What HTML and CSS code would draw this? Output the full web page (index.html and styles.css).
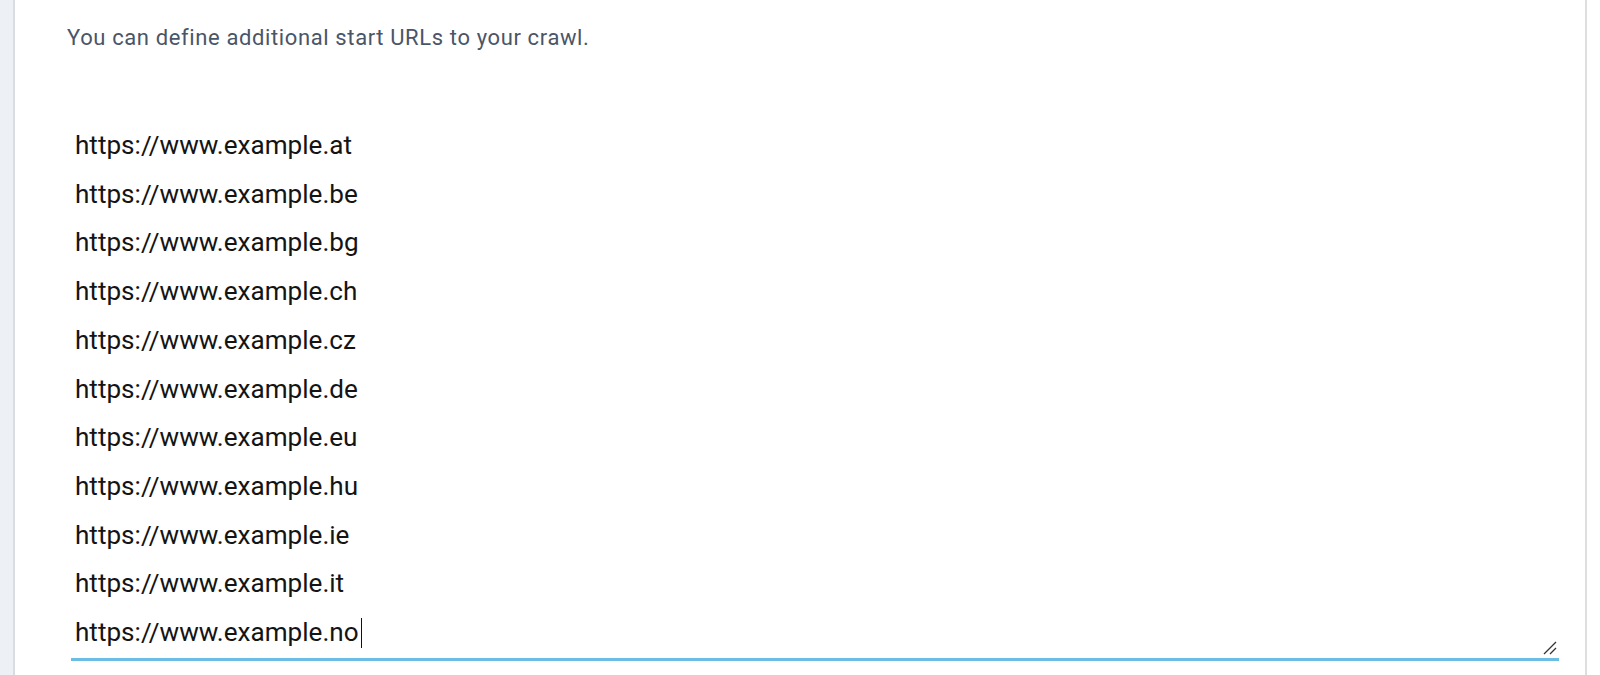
FILE: index.html
```html
<!DOCTYPE html>
<html lang="en">
<head>
<meta charset="utf-8">
<title>Start URLs</title>
<link rel="stylesheet" href="styles.css">
</head>
<body>
<div class="page">
  <div class="gutter"></div>
  <main class="card">
    <p class="hint">You can define additional start URLs to your crawl.</p>
    <div class="field">
      <div class="lines">
        <div class="line">https://www.example.at</div>
        <div class="line">https://www.example.be</div>
        <div class="line">https://www.example.bg</div>
        <div class="line">https://www.example.ch</div>
        <div class="line">https://www.example.cz</div>
        <div class="line">https://www.example.de</div>
        <div class="line">https://www.example.eu</div>
        <div class="line">https://www.example.hu</div>
        <div class="line">https://www.example.ie</div>
        <div class="line">https://www.example.it</div>
        <div class="line">https://www.example.no<span class="caret"></span></div>
      </div>
      <svg class="grip" width="16" height="16" viewBox="0 0 16 16" aria-hidden="true">
        <line x1="2" y1="14" x2="14" y2="2" stroke="#333" stroke-width="1.2"/>
        <line x1="8" y1="14" x2="14" y2="8" stroke="#333" stroke-width="1.2"/>
      </svg>
    </div>
  </main>
  <div class="edge"></div>
</div>
</body>
</html>
```

FILE: styles.css
```css
html, body {
  margin: 0;
  padding: 0;
  background: #ffffff;
}

.page {
  display: flex;
  width: 1600px;
  height: 675px;
  overflow: hidden;
}

.gutter {
  width: 13px;
  flex: none;
  background: #edf1f5;
  border-right: 2px solid #d9dde2;
}

.card {
  flex: 1;
  background: #ffffff;
  padding: 0 26px 0 52px;
  border-right: 2px solid #dedede;
  font-family: Roboto, "Liberation Sans", sans-serif;
}

.edge {
  width: 13px;
  flex: none;
  background: #ffffff;
}

.hint {
  margin: 0;
  padding-top: 27px;
  font-size: 22px;
  line-height: 22px;
  letter-spacing: 0.62px;
  color: #4a5568;
}

.field {
  position: relative;
  margin-top: 72px;
  margin-left: 4px;
  border-bottom: 3px solid #6cbde3;
  padding: 0 0 1px 4px;
}

.line {
  font-size: 26.1px;
  line-height: 48.7px;
  color: #141414;
  white-space: pre;
}

.caret {
  display: inline-block;
  width: 1.5px;
  height: 30px;
  margin-left: 2px;
  background: #111;
  vertical-align: -7px;
}

.grip {
  position: absolute;
  right: 1px;
  bottom: 2px;
}
```
